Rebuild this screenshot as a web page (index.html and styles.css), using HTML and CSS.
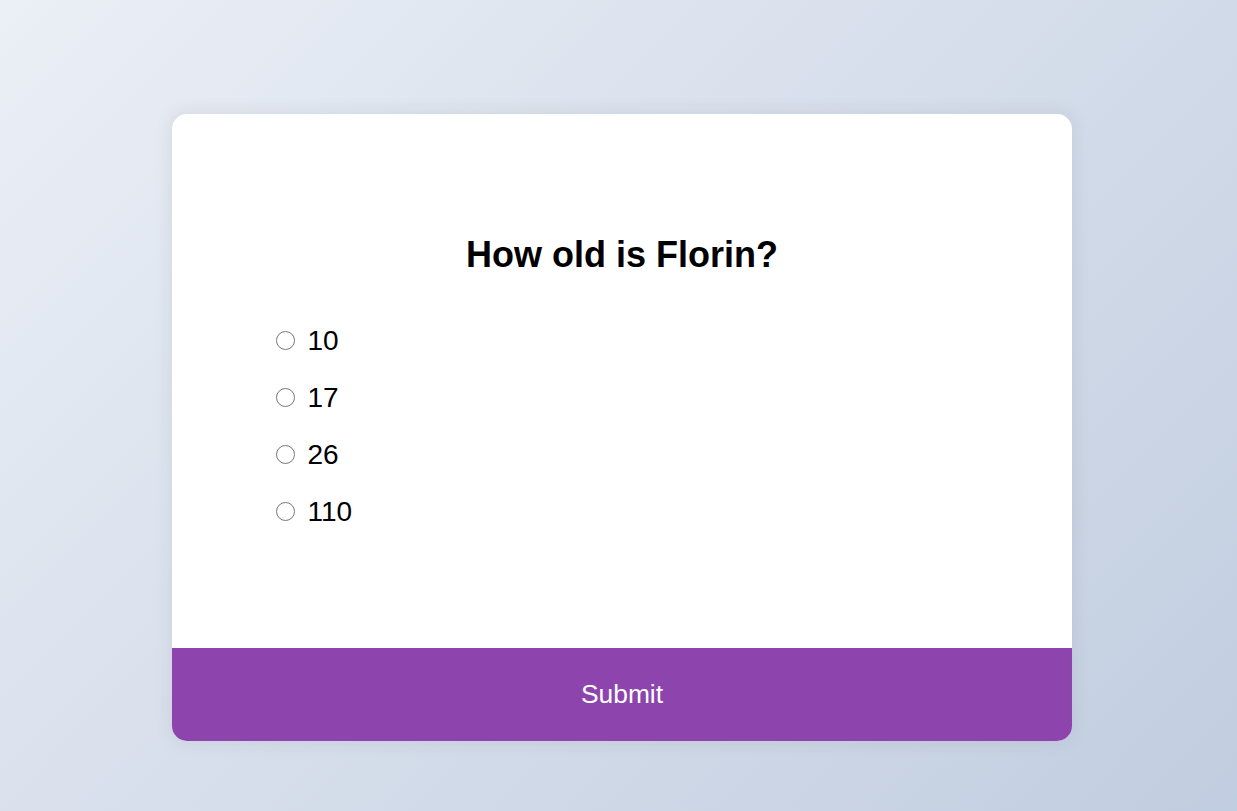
FILE: index.html
```html
<!DOCTYPE html>
<html lang="en">
<head>
<meta charset="UTF-8">
<title>Quiz</title>
<link rel="stylesheet" href="styles.css">
</head>
<body>
  <div class="quiz-container">
    <div class="quiz-header">
      <h2 class="question">How old is Florin?</h2>
      <ul class="answers">
        <li><label class="answer"><input type="radio" name="answer" class="radio"><span>10</span></label></li>
        <li><label class="answer"><input type="radio" name="answer" class="radio"><span>17</span></label></li>
        <li><label class="answer"><input type="radio" name="answer" class="radio"><span>26</span></label></li>
        <li><label class="answer"><input type="radio" name="answer" class="radio"><span>110</span></label></li>
      </ul>
    </div>
    <button class="submit">Submit</button>
  </div>
</body>
</html>
```
FILE: styles.css
```css
html, body {
  margin: 0;
  height: 100%;
}
body {
  box-sizing: border-box;
  background-image: linear-gradient(135deg, #ebeff6 0%, #c1cde0 100%);
  font-family: "Liberation Sans", Arial, sans-serif;
  display: flex;
  justify-content: center;
  align-items: flex-start;
  padding: 114px 0 0 7px;
  overflow: hidden;
}
.quiz-container {
  background: #fff;
  border-radius: 15px;
  box-shadow: 0 0 15px 3px rgba(100, 100, 100, 0.1);
  width: 900px;
  overflow: hidden;
}
.quiz-header {
  padding: 96px;
}
.question {
  margin: 0;
  padding: 24px;
  text-align: center;
  font-size: 36px;
  font-weight: bold;
  color: #000;
  line-height: 41px;
}
.answers {
  list-style: none;
  padding: 0;
  margin: 25px 0 24px;
}
.answers li {
  font-size: 28px;
  margin: 24px 0;
  height: 33px;
  line-height: 33px;
}
.answers li:first-child { margin-top: 0; }
.answers li:last-child { margin-bottom: 0; }
.answer {
  display: flex;
  align-items: center;
  cursor: pointer;
  color: #000;
}
.radio {
  width: 19.5px;
  height: 19.5px;
  margin: 0 12.5px 0 7.5px;
}
.submit {
  display: block;
  width: 100%;
  border: none;
  background: #8e44ad;
  color: #fff;
  font-family: inherit;
  font-size: 26.4px;
  line-height: 30px;
  padding: 30.5px 0 32.5px;
  cursor: pointer;
}
```
